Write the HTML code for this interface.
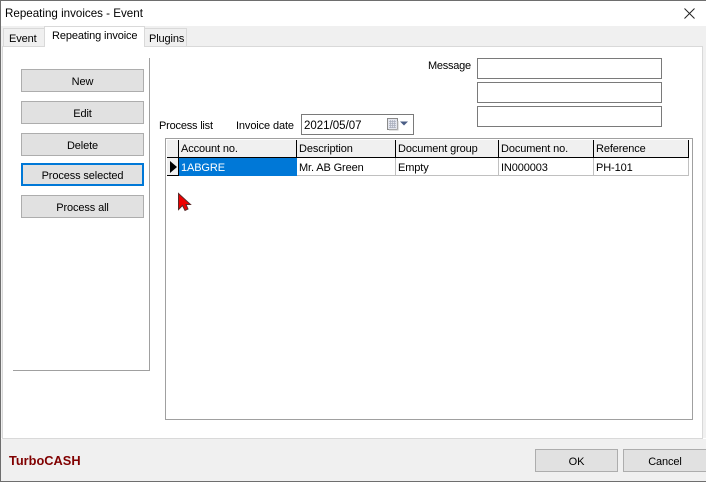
<!DOCTYPE html>
<html><head><meta charset="utf-8">
<style>
html,body{margin:0;padding:0;background:#fff;}
#w{position:relative;width:706px;height:482px;overflow:hidden;background:#fff;font-family:"Liberation Sans",sans-serif;font-size:11px;letter-spacing:-0.12px;color:#000;}
#w div{position:absolute;box-sizing:border-box;}
.t{white-space:nowrap;line-height:14px;}
.b{background:#e1e1e1;border:1px solid #adadad;text-align:center;line-height:25px;white-space:nowrap;}
.i{background:#fff;border:1px solid #7a7a7a;}
.h{background:#f0f0f0;top:140px;height:18px;border-right:1px solid #000;border-bottom:1px solid #000;line-height:18px;padding-left:2px;white-space:nowrap;}
.c{top:158px;height:18px;border-right:1px solid #c0c0c0;border-bottom:1px solid #c0c0c0;line-height:20px;padding-left:3px;white-space:nowrap;background:#fff;}
</style></head><body>
<div id="w">
<div style="left:0;top:0;width:706px;height:1px;background:#6e6e6e"></div>
<div style="left:0;top:0;width:1px;height:482px;background:#6e6e6e"></div>
<div style="left:0;top:481px;width:706px;height:1px;background:#6e6e6e"></div>

<div class="t" style="left:5px;top:7px;font-size:11.6px;letter-spacing:0">Repeating invoices - Event</div>
<svg style="position:absolute;left:684px;top:8px" width="11" height="11" viewBox="0 0 11 11"><path d="M.5.5l10 10M10.5.5l-10 10" stroke="#222" stroke-width="1" fill="none"/></svg>

<div style="left:1px;top:26px;width:705px;height:20px;background:#f0f0f0"></div>
<div style="left:1px;top:46px;width:705px;height:392px;background:#f0f0f0"></div>
<div style="left:2px;top:46px;width:701px;height:393px;background:#fff;border:1px solid #d9d9d9"></div>

<div class="t" style="left:3px;top:28px;width:42px;height:19px;background:#f0f0f0;border:1px solid #d9d9d9;border-right:0;padding:3px 0 0 5px">Event</div>
<div class="t" style="left:144px;top:28px;width:43px;height:19px;background:#f0f0f0;border:1px solid #d9d9d9;border-left:0;padding:3px 0 0 5px">Plugins</div>
<div class="t" style="left:44px;top:26px;width:101px;height:21px;background:#fff;border:1px solid #d9d9d9;border-bottom:0;padding:2px 0 0 7px">Repeating invoice</div>

<div style="left:149px;top:58px;width:1px;height:313px;background:#a0a0a0"></div>
<div style="left:13px;top:370px;width:137px;height:1px;background:#a0a0a0"></div>

<div class="b" style="left:21px;top:69px;width:123px;height:23px">New</div>
<div class="b" style="left:21px;top:101px;width:123px;height:23px">Edit</div>
<div class="b" style="left:21px;top:133px;width:123px;height:23px">Delete</div>
<div class="b" style="left:21px;top:163px;width:123px;height:23px;border:2px solid #0078d7;line-height:23px">Process selected</div>
<div class="b" style="left:21px;top:195px;width:123px;height:23px">Process all</div>

<div class="t" style="left:428px;top:59px;letter-spacing:-0.25px">Message</div>
<div class="i" style="left:477px;top:58px;width:185px;height:21px"></div>
<div class="i" style="left:477px;top:82px;width:185px;height:21px"></div>
<div class="i" style="left:477px;top:106px;width:185px;height:21px"></div>

<div class="t" style="left:159px;top:119px;letter-spacing:-0.2px">Process list</div>
<div class="t" style="left:236px;top:119px">Invoice date</div>
<div class="i" style="left:301px;top:114px;width:113px;height:21px"></div>
<div class="t" style="left:304px;top:119px;font-size:11.5px;letter-spacing:0">2021/05/07</div>
<svg style="position:absolute;left:387px;top:118px" width="24" height="14" viewBox="0 0 24 14">
<rect x="0.5" y="0.5" width="10" height="11" fill="#e4e6ee" stroke="#8a8a8a"/>
<path d="M2 3.500h7M2 5.500h7M2 7.500h7M2 9.500h7M3.500 2v8M5.500 2v8M7.500 2v8" stroke="#a9aebd" stroke-width=".7"/>
<path d="M11 3v9H2" stroke="#c4c4c4" fill="none"/>
<path d="M13 3.500h8l-4 4z" fill="#4a5d85"/>
</svg>

<div style="left:165px;top:138px;width:528px;height:282px;background:#fff;border:1px solid #a0a0a0"></div>
<div style="left:167px;top:140px;width:12px;height:18px;background:#f0f0f0;border-right:1px solid #000;border-bottom:1px solid #000"></div>
<div class="h" style="left:179px;width:118px">Account no.</div>
<div class="h" style="left:297px;width:99px;padding-left:2px">Description</div>
<div class="h" style="left:396px;width:103px;padding-left:2px">Document group</div>
<div class="h" style="left:499px;width:95px;padding-left:2px">Document no.</div>
<div class="h" style="left:594px;width:95px;padding-left:2px">Reference</div>

<div style="left:167px;top:158px;width:12px;height:18px;background:#f0f0f0;border-right:1px solid #000;border-bottom:1px solid #000"></div>
<svg style="position:absolute;left:170px;top:161px" width="8" height="12" viewBox="0 0 8 12"><path d="M0 0l7 6-7 6z" fill="#000"/></svg>
<div class="c" style="left:179px;width:118px;background:#0078d7;color:#fff;padding-left:2px;border:0;height:18px">1ABGRE</div>
<div class="c" style="left:297px;width:99px;padding-left:2px">Mr. AB Green</div>
<div class="c" style="left:396px;width:103px;padding-left:2px">Empty</div>
<div class="c" style="left:499px;width:95px;padding-left:2px">IN000003</div>
<div class="c" style="left:594px;width:95px;padding-left:2px">PH-101</div>

<svg style="position:absolute;left:177px;top:192px" width="15" height="20" viewBox="0 0 15 20">
<path d="M1.500 1.500v16l4-4 2.500 5 3-1.500-2-4.500h4.500z" fill="#ee0000" stroke="#5a2a2a" stroke-width="1"/>
</svg>

<div style="left:1px;top:439px;width:705px;height:42px;background:#f0f0f0"></div>
<div class="t" style="left:9px;top:454px;color:#800000;font-weight:bold;font-size:12.8px;letter-spacing:0">TurboCASH</div>
<div class="b" style="left:535px;top:449px;width:83px;height:23px">OK</div>
<div class="b" style="left:623px;top:449px;width:83px;height:23px;border-right:0">Cancel</div>
</div>
</body></html>
